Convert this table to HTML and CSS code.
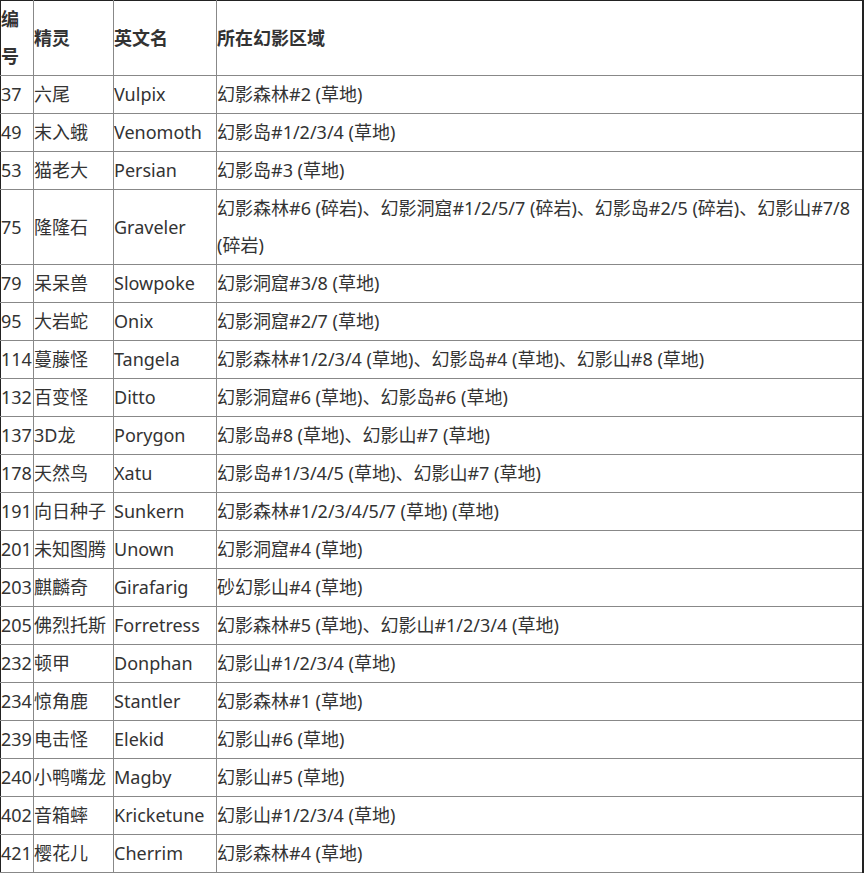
FILE: index.html
```html
<!DOCTYPE html>
<html lang="zh-CN">
<head>
<meta charset="utf-8">
<title>幻影区域精灵</title>
<link rel="stylesheet" href="styles.css">
</head>
<body>
<table class="poke">
<colgroup>
<col class="c-no">
<col class="c-cn">
<col class="c-en">
<col class="c-area">
</colgroup>
<thead>
<tr><th>编号</th><th>精灵</th><th>英文名</th><th>所在幻影区域</th></tr>
</thead>
<tbody>
<tr><td>37</td><td>六尾</td><td>Vulpix</td><td>幻影森林#2 (草地)</td></tr>
<tr><td>49</td><td>末入蛾</td><td>Venomoth</td><td>幻影岛#1/2/3/4 (草地)</td></tr>
<tr><td>53</td><td>猫老大</td><td>Persian</td><td>幻影岛#3 (草地)</td></tr>
<tr><td>75</td><td>隆隆石</td><td>Graveler</td><td>幻影森林#6 (碎岩)、幻影洞窟#1/2/5/7 (碎岩)、幻影岛#2/5 (碎岩)、幻影山#7/8 (碎岩)</td></tr>
<tr><td>79</td><td>呆呆兽</td><td>Slowpoke</td><td>幻影洞窟#3/8 (草地)</td></tr>
<tr><td>95</td><td>大岩蛇</td><td>Onix</td><td>幻影洞窟#2/7 (草地)</td></tr>
<tr><td>114</td><td>蔓藤怪</td><td>Tangela</td><td>幻影森林#1/2/3/4 (草地)、幻影岛#4 (草地)、幻影山#8 (草地)</td></tr>
<tr><td>132</td><td>百变怪</td><td>Ditto</td><td>幻影洞窟#6 (草地)、幻影岛#6 (草地)</td></tr>
<tr><td>137</td><td>3D龙</td><td>Porygon</td><td>幻影岛#8 (草地)、幻影山#7 (草地)</td></tr>
<tr><td>178</td><td>天然鸟</td><td>Xatu</td><td>幻影岛#1/3/4/5 (草地)、幻影山#7 (草地)</td></tr>
<tr><td>191</td><td>向日种子</td><td>Sunkern</td><td>幻影森林#1/2/3/4/5/7 (草地) (草地)</td></tr>
<tr><td>201</td><td>未知图腾</td><td>Unown</td><td>幻影洞窟#4 (草地)</td></tr>
<tr><td>203</td><td>麒麟奇</td><td>Girafarig</td><td>砂幻影山#4 (草地)</td></tr>
<tr><td>205</td><td>佛烈托斯</td><td>Forretress</td><td>幻影森林#5 (草地)、幻影山#1/2/3/4 (草地)</td></tr>
<tr><td>232</td><td>顿甲</td><td>Donphan</td><td>幻影山#1/2/3/4 (草地)</td></tr>
<tr><td>234</td><td>惊角鹿</td><td>Stantler</td><td>幻影森林#1 (草地)</td></tr>
<tr><td>239</td><td>电击怪</td><td>Elekid</td><td>幻影山#6 (草地)</td></tr>
<tr><td>240</td><td>小鸭嘴龙</td><td>Magby</td><td>幻影山#5 (草地)</td></tr>
<tr><td>402</td><td>音箱蟀</td><td>Kricketune</td><td>幻影山#1/2/3/4 (草地)</td></tr>
<tr><td>421</td><td>樱花儿</td><td>Cherrim</td><td>幻影森林#4 (草地)</td></tr>
</tbody>
</table>
</body>
</html>
```
FILE: styles.css
```css
html, body {
  margin: 0;
  padding: 0;
  background: #fff;
}
body {
  font-family: "Noto Sans", "Noto Sans CJK SC", sans-serif;
  font-size: 18px;
  color: #333;
}
.poke {
  width: 864px;
  table-layout: fixed;
  border-collapse: collapse;
  border-top: 1px solid #222;
  border-left: 1px solid #222;
  border-right: 2px solid #222;
}
.c-no { width: 33px; }
.c-cn { width: 80px; }
.c-en { width: 103px; }
.poke th,
.poke td {
  border: 1px solid #888;
  padding: 0;
  line-height: 37px;
  text-align: left;
  vertical-align: middle;
  overflow: hidden;
  word-break: break-all;
}
.poke th {
  font-weight: bold;
}
.poke tr:first-child th { border-top-color: #222; }
.poke th:first-child, .poke td:first-child { border-left-color: #222; }
.poke th:last-child, .poke td:last-child { border-right: 2px solid #222; }
```
